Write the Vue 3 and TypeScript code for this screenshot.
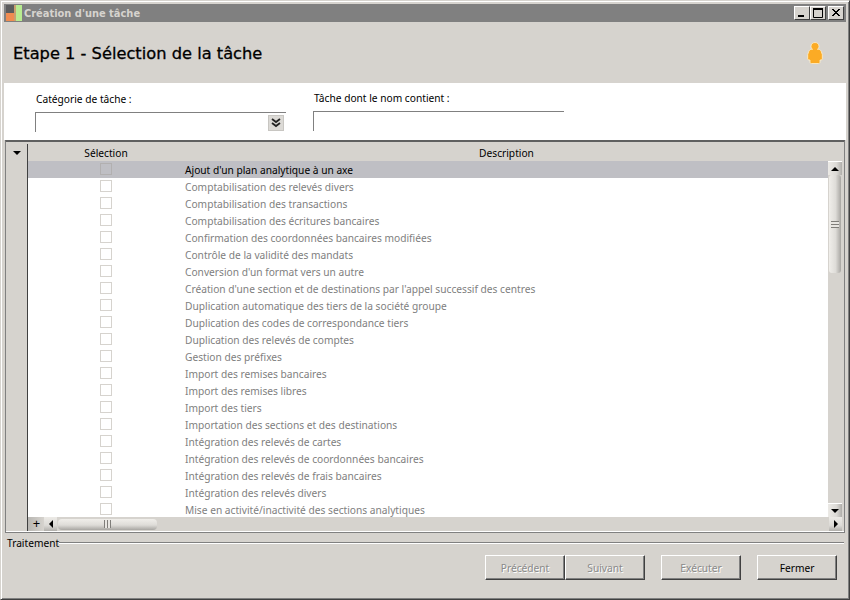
<script setup lang="ts">
const tasks: string[] = [
  "Ajout d'un plan analytique à un axe",
  "Comptabilisation des relevés divers",
  "Comptabilisation des transactions",
  "Comptabilisation des écritures bancaires",
  "Confirmation des coordonnées bancaires modifiées",
  "Contrôle de la validité des mandats",
  "Conversion d'un format vers un autre",
  "Création d'une section et de destinations par l'appel successif des centres",
  "Duplication automatique des tiers de la société groupe",
  "Duplication des codes de correspondance tiers",
  "Duplication des relevés de comptes",
  "Gestion des préfixes",
  "Import des remises bancaires",
  "Import des remises libres",
  "Import des tiers",
  "Importation des sections et des destinations",
  "Intégration des relevés de cartes",
  "Intégration des relevés de coordonnées bancaires",
  "Intégration des relevés de frais bancaires",
  "Intégration des relevés divers",
  "Mise en activité/inactivité des sections analytiques",
];
</script>

<template>
  <div class="window">
    <div class="titlebar">
      <svg class="app-icon" width="16" height="16" viewBox="0 0 16 16">
        <rect x="0" y="0" width="8" height="8" fill="#5c5c5c" />
        <rect x="0" y="8" width="8" height="8" fill="#f08c50" />
        <rect x="8" y="0" width="2" height="16" fill="#c9a070" />
        <rect x="10" y="0" width="6" height="16" fill="#b8ec90" />
      </svg>
      <span class="title-text">Création d'une tâche</span>
      <div class="win-btns">
        <button class="win-btn">
          <svg width="14" height="12" viewBox="0 0 14 12"><rect x="3" y="8" width="6" height="2" fill="#000" /></svg>
        </button>
        <button class="win-btn">
          <svg width="14" height="12" viewBox="0 0 14 12"><path d="M2.500 2.500h9v8h-9z" fill="none" stroke="#000" /><rect x="2" y="1" width="10" height="2" fill="#000" /></svg>
        </button>
        <button class="win-btn win-close">
          <svg width="14" height="12" viewBox="0 0 14 12"><path d="M3 2l7 7M4 2l7 7M10 2l-7 7M11 2l-7 7" stroke="#000" fill="none" /></svg>
        </button>
      </div>
    </div>

    <div class="heading">
      <h1>Etape 1 - Sélection de la tâche</h1>
      <svg class="person" width="16" height="22" viewBox="0 0 16 22">
        <path d="M8 .5c2.400 0 4 1.700 4 3.800 0 1.300-.6 2.300-1.500 3h.8c1.600 0 2.400 1 3 2.300l1 3v4.300c0 .7-.5 1.100-1.300 1.100h-1v2c0 1-.6 1.500-1.500 1.500h-7c-1 0-1.500-.5-1.500-1.500v-2h-1c-.8 0-1.300-.4-1.300-1.100v-4.300l1-3c.6-1.300 1.400-2.300 3-2.300h.8c-.9-.7-1.500-1.700-1.500-3 0-2.100 1.600-3.800 4-3.800z" fill="#fbab25" stroke="#fff0cc" stroke-width=".8" />
      </svg>
    </div>

    <div class="filters">
      <div class="field field-cat">
        <label>Catégorie de tâche :</label>
        <div class="input">
          <span class="combo-btn">
            <svg width="10" height="10" viewBox="0 0 10 10"><path d="M1 1l4 3 4-3M1 5l4 3 4-3" fill="none" stroke="#222" stroke-width="1.800" /></svg>
          </span>
        </div>
      </div>
      <div class="field field-name">
        <label>Tâche dont le nom contient :</label>
        <div class="input"></div>
      </div>
    </div>

    <div class="grid-panel">
      <div class="gutter">
        <div class="gutter-head"><span class="tri-down"></span></div>
      </div>
      <div class="grid-main">
        <div class="grid-head">
          <span class="col-sel">Sélection</span>
          <span class="col-desc">Description</span>
        </div>
        <div class="grid-mid">
          <div class="rows">
            <div v-for="(task, i) in tasks" :key="task" class="row" :class="{ selected: i === 0 }">
              <span class="cell-check"><span class="check"></span></span>
              <span class="cell-text">{{ task }}</span>
            </div>
          </div>
          <div class="vscroll">
            <div class="sb-btn"><span class="tri-up"></span></div>
            <div class="v-track">
              <div class="v-thumb"><span class="grip-h"></span></div>
            </div>
            <div class="sb-btn"><span class="tri-down"></span></div>
          </div>
        </div>
        <div class="hscroll">
          <div class="plus">+</div>
          <div class="h-btn"><span class="tri-left"></span></div>
          <div class="h-track">
            <div class="h-thumb"><span class="grip-v"></span></div>
          </div>
          <div class="h-btn"><span class="tri-right"></span></div>
        </div>
      </div>
    </div>

    <div class="legend">
      <span>Traitement</span>
      <span class="legend-line"></span>
    </div>

    <div class="actions">
      <div class="btn-group">
        <button class="btn" disabled>Précédent</button>
        <button class="btn" disabled>Suivant</button>
      </div>
      <button class="btn" disabled>Exécuter</button>
      <button class="btn">Fermer</button>
    </div>
  </div>
</template>

<style>
html, body { margin: 0; padding: 0; background: #d6d3ce; }
</style>

<style scoped>
.window {
  box-sizing: border-box;
  width: 850px;
  height: 600px;
  display: flex;
  flex-direction: column;
  background: #d6d3ce;
  border: 1px solid #d6d3ce;
  border-right-color: #404040;
  border-bottom-color: #404040;
  box-shadow: inset 1px 1px 0 #fff, inset -1px -1px 0 #808080;
  padding: 3px 3px 3px 3px;
  font-family: "Noto Sans", sans-serif;
  font-size: 10.2px;
  color: #000;
}
.titlebar {
  flex: none;
  height: 18px;
  background: #808080;
  display: flex;
  align-items: center;
}
.app-icon { flex: none; margin-left: 2px; }
.title-text {
  margin-left: 2px;
  color: #d6d3ce;
  font-family: "DejaVu Sans", sans-serif;
  font-weight: bold;
  font-size: 9.9px;
}
.win-btns { margin-left: auto; margin-right: 2px; display: flex; }
.win-btn {
  box-sizing: border-box;
  width: 16px;
  height: 14px;
  padding: 0;
  background: #d6d3ce;
  border: 1px solid;
  border-color: #fff #404040 #404040 #fff;
  display: flex;
  align-items: center;
  justify-content: center;
}
.win-close { margin-left: 2px; }
.heading {
  flex: none;
  height: 60px;
  box-sizing: border-box;
  display: flex;
  align-items: center;
  justify-content: space-between;
  padding: 2px 23px 0 9px;
}
h1 {
  margin: 0;
  font-family: "DejaVu Sans", sans-serif;
  font-weight: normal;
  font-size: 16.25px;
  -webkit-text-stroke: 0.3px #000;
}
.person { flex: none; }
.filters {
  flex: none;
  height: 57px;
  box-sizing: border-box;
  background: #fff;
  margin-top: 1px;
  display: flex;
}
.field { display: flex; flex-direction: column; }
.field label { white-space: nowrap; line-height: 16px; }
.field-cat { width: 251px; margin-left: 31px; padding-top: 8px; }
.field-cat label { margin-left: 1px; }
.field-cat .input { margin-top: 5px; height: 20px; }
.field-name { width: 251px; margin-left: 27px; padding-top: 7px; }
.field-name label { margin-left: 1px; }
.field-name .input { margin-top: 5px; height: 20px; }
.input {
  position: relative;
  box-sizing: border-box;
  border-top: 1px solid #808080;
  border-left: 1px solid #808080;
}
.combo-btn {
  position: absolute;
  right: 2px;
  top: 2px;
  box-sizing: border-box;
  width: 16px;
  height: 16px;
  background: #dcdad6;
  border: 1px solid #c8c6c2;
  display: flex;
  align-items: center;
  justify-content: center;
}
.grid-panel {
  flex: none;
  height: 393px;
  box-sizing: border-box;
  margin: 0 0 0 1px;
  width: 840px;
  border: 1px solid #808080;
  border-top: 2px solid #606060;
  padding: 2px 2px 1px 1px;
  display: flex;
  background: #d6d3ce;
  box-shadow: inset 0 -1px 0 #fff;
}
.gutter {
  flex: none;
  width: 21px;
  border-right: 1px solid #404040;
  box-sizing: border-box;
}
.gutter-head { height: 17px; display: flex; align-items: center; justify-content: center; }
.grid-main {
  flex: 1;
  min-width: 0;
  display: flex;
  flex-direction: column;
  overflow: hidden;
}
.grid-head {
  flex: none;
  height: 17px;
  box-sizing: border-box;
  padding-top: 2px;
  display: flex;
  align-items: center;
  line-height: 15px;
}
.col-sel { width: 156px; text-align: center; }
.col-desc { flex: 1; text-align: center; padding-right: 13px; }
.grid-mid {
  flex: 1;
  min-height: 0;
  display: flex;
}
.rows {
  flex: 1;
  min-width: 0;
  background: #fff;
  overflow: hidden;
}
.row {
  height: 17px;
  display: flex;
  align-items: center;
  color: #808080;
  white-space: nowrap;
}
.row.selected { background: #bfbfc4; color: #000; }
.cell-check { width: 157px; box-sizing: border-box; padding-right: 1px; flex: none; display: flex; justify-content: center; }
.check {
  box-sizing: border-box;
  width: 12px;
  height: 12px;
  border: 1px solid #d6d3ce;
  display: block;
  margin-top: -2px;
}
.selected .check { border-color: #b2b0b0; }
.vscroll {
  flex: none;
  width: 14px;
  display: flex;
  flex-direction: column;
  background: #d6d3ce;
}
.sb-btn {
  flex: none;
  height: 14px;
  display: flex;
  align-items: center;
  justify-content: center;
  background: linear-gradient(90deg, #eceae6, #dcdad6 60%, #b0aeaa);
  border-top: 1px solid #fff;
  box-sizing: border-box;
}
.v-track { flex: 1; background: #d6d3ce; display: flex; flex-direction: column; }
.v-thumb {
  box-sizing: border-box;
  margin: 0 1px;
  height: 98px;
  border-radius: 3px;
  background: linear-gradient(90deg, #f0eeea, #dedcd8 55%, #a8a6a2);
  display: flex;
  align-items: center;
  justify-content: center;
}
.grip-h {
  width: 8px;
  height: 7px;
  background: repeating-linear-gradient(180deg, #807e7a 0 1px, #e8e6e2 1px 3px);
}
.hscroll {
  flex: none;
  height: 14px;
  display: flex;
  align-items: center;
  background: #d6d3ce;
}
.plus {
  flex: none;
  box-sizing: border-box;
  width: 16px;
  height: 14px;
  padding-left: 1px;
  background: linear-gradient(90deg, #b8b6b2, #d6d3ce);
  font-size: 13px;
  line-height: 13px;
  text-align: center;
}
.h-btn {
  flex: none;
  width: 13px;
  height: 14px;
  display: flex;
  align-items: center;
  justify-content: center;
  background: linear-gradient(180deg, #eceae6, #dcdad6 60%, #b0aeaa);
}
.h-track { flex: 1; display: flex; align-items: center; padding-left: 1px; }
.h-thumb {
  box-sizing: border-box;
  width: 99px;
  height: 11px;
  border-radius: 4px;
  background: linear-gradient(180deg, #f0eeea, #dedcd8 55%, #a8a6a2);
  display: flex;
  align-items: center;
  justify-content: center;
}
.grip-v {
  width: 7px;
  height: 8px;
  background: repeating-linear-gradient(90deg, #807e7a 0 1px, #e8e6e2 1px 3px);
}
.tri-down, .tri-up, .tri-left, .tri-right { display: block; width: 0; height: 0; border-style: solid; border-color: transparent; }
.tri-down { border-width: 4px 4px 0; border-top-color: #000; }
.tri-up { border-width: 0 4px 4px; border-bottom-color: #000; }
.tri-left { border-width: 4px 4px 4px 0; border-right-color: #000; }
.tri-right { border-width: 4px 0 4px 4px; border-left-color: #000; }
.legend {
  flex: none;
  display: flex;
  align-items: center;
  height: 20px;
  margin-left: 3px;
}
.legend-line {
  flex: 1;
  height: 0;
  margin-right: 2px;
  border-top: 1px solid #808080;
  border-bottom: 1px solid #fff;
}
.actions {
  flex: 1;
  display: flex;
  justify-content: flex-end;
  gap: 16px;
  padding: 2px 9px 0 0;
}
.btn-group { display: flex; }
.btn {
  box-sizing: border-box;
  width: 80px;
  height: 25px;
  padding: 0;
  background: #d6d3ce;
  border: 1px solid;
  border-color: #fff #404040 #404040 #fff;
  box-shadow: inset -1px -1px 0 #808080;
  font-family: "Noto Sans", sans-serif;
  font-size: 10.2px;
  color: #000;
}
.btn:disabled { color: #8a8a8a; text-shadow: 1px 1px 0 #fff; }
</style>
